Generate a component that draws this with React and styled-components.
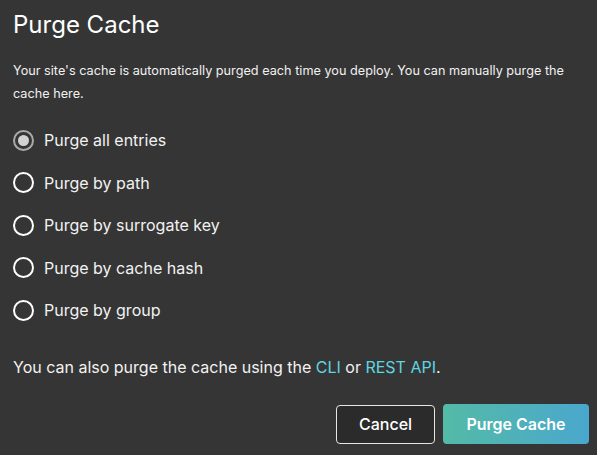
import React, { useState } from 'react';
import styled, { createGlobalStyle } from 'styled-components';

const GlobalStyle = createGlobalStyle`
  html, body {
    margin: 0;
    padding: 0;
    background: #353535;
  }
  body {
    font-family: Inter, "Noto Sans", sans-serif;
    color: #f2f2f2;
  }
`;

const Dialog = styled.div`
  width: 597px;
  height: 455px;
  box-sizing: border-box;
  padding: 9px 8px 0 13px;
  background: #353535;
  display: flex;
  flex-direction: column;
`;

const Title = styled.h1`
  margin: 0;
  font-size: 24px;
  font-weight: 400;
  line-height: 32px;
  color: #ffffff;
`;

const Description = styled.p`
  margin: 18px 0 0;
  font-size: 12.7px;
  line-height: 23px;
  color: #f0f0f0;
`;

const Options = styled.div`
  display: flex;
  flex-direction: column;
  margin-top: 14px;
`;

const Option = styled.label`
  display: flex;
  align-items: center;
  gap: 10px;
  height: 42.5px;
  font-size: 16px;
  color: #f2f2f2;
  cursor: pointer;
`;

const Radio = styled.span`
  width: 21px;
  height: 21px;
  box-sizing: border-box;
  border-radius: 50%;
  border: 2px solid ${(p) => (p.checked ? '#a9a9a9' : '#ffffff')};
  display: flex;
  align-items: center;
  justify-content: center;
  flex-shrink: 0;

  &::after {
    content: '';
    width: 11px;
    height: 11px;
    border-radius: 50%;
    background: #d2d2d2;
    display: ${(p) => (p.checked ? 'block' : 'none')};
  }
`;

const Note = styled.p`
  margin: 24px 0 0;
  font-size: 16px;
  line-height: 22px;
  color: #f2f2f2;
`;

const TextLink = styled.a`
  color: #5fd6e0;
  text-decoration: none;
`;

const Actions = styled.div`
  display: flex;
  justify-content: flex-end;
  gap: 8px;
  margin-top: 27px;
`;

const Button = styled.button`
  height: 39px;
  box-sizing: border-box;
  border-radius: 4px;
  font-family: Inter, "Noto Sans", sans-serif;
  font-size: 16px;
  cursor: pointer;
  padding: 0 22px;
`;

const CancelButton = styled(Button)`
  width: 99px;
  background: #2b2b2b;
  color: #ffffff;
  border: 1.5px solid #e6e6e6;
  font-weight: 500;
`;

const PrimaryButton = styled(Button)`
  width: 146px;
  height: 40px;
  margin-top: -1px;
  border: none;
  color: #ffffff;
  font-weight: 600;
  background: linear-gradient(90deg, #53bba6 0%, #4aa7cd 100%);
`;

const options = [
  'Purge all entries',
  'Purge by path',
  'Purge by surrogate key',
  'Purge by cache hash',
  'Purge by group',
];

export default function App() {
  const [selected, setSelected] = useState(0);
  return (
    <>
      <GlobalStyle />
      <Dialog>
        <Title>Purge Cache</Title>
        <Description>
          Your site's cache is automatically purged each time you deploy. You can manually purge the
          cache here.
        </Description>
        <Options>
          {options.map((o, i) => (
            <Option key={o} onClick={() => setSelected(i)}>
              <Radio checked={selected === i} />
              {o}
            </Option>
          ))}
        </Options>
        <Note>
          You can also purge the cache using the <TextLink href="#">CLI</TextLink> or{' '}
          <TextLink href="#">REST API</TextLink>.
        </Note>
        <Actions>
          <CancelButton>Cancel</CancelButton>
          <PrimaryButton>Purge Cache</PrimaryButton>
        </Actions>
      </Dialog>
    </>
  );
}
